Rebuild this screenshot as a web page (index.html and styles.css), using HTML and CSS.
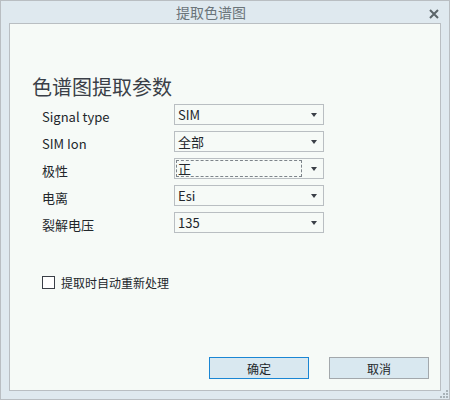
FILE: index.html
```html
<!DOCTYPE html>
<html lang="zh-CN">
<head>
    <meta charset="UTF-8">
    <title>提取色谱图</title>
    <link rel="stylesheet" href="styles.css">
</head>
<body>
    <div class="dialog">
        <div class="titlebar">
            <span class="title">提取色谱图</span>
            <svg class="close" width="10" height="10" viewBox="0 0 10 10">
                <path d="M1 1 L9 9 M9 1 L1 9" stroke="#5b6569" stroke-width="2"/>
            </svg>
        </div>
        <div class="panel">
            <h1>色谱图提取参数</h1>
            <div class="fields">
                <label>Signal type</label>
                <div class="select"><span>SIM</span><i class="arrow"></i></div>
                <label>SIM Ion</label>
                <div class="select"><span>全部</span><i class="arrow"></i></div>
                <label>极性</label>
                <div class="select focused"><span>正</span><i class="arrow"></i></div>
                <label>电离</label>
                <div class="select"><span>Esi</span><i class="arrow"></i></div>
                <label>裂解电压</label>
                <div class="select"><span>135</span><i class="arrow"></i></div>
            </div>
            <div class="check">
                <span class="box"></span>
                <span>提取时自动重新处理</span>
            </div>
            <div class="buttons">
                <button class="primary">确定</button>
                <button>取消</button>
            </div>
        </div>
        <svg class="grip" width="12" height="10" viewBox="0 0 12 10">
            <g fill="#a9b3b8">
                <rect x="9" y="1" width="2" height="2"/>
                <rect x="6" y="4" width="2" height="2"/>
                <rect x="9" y="4" width="2" height="2"/>
                <rect x="3" y="7" width="2" height="2"/>
                <rect x="6" y="7" width="2" height="2"/>
                <rect x="9" y="7" width="2" height="2"/>
            </g>
        </svg>
    </div>
</body>
</html>
```

FILE: styles.css
```css
* {
    box-sizing: border-box;
}
body {
    margin: 0;
    font-family: "Noto Sans CJK SC", "Noto Sans", sans-serif;
    font-size: 12px;
    color: #22262b;
}
.dialog {
    position: relative;
    width: 450px;
    height: 400px;
    border: 1px solid #b9bec2;
    background-color: #dfe9ef;
    display: flex;
    flex-direction: column;
}
.titlebar {
    height: 22px;
    display: flex;
    align-items: center;
    justify-content: center;
    position: relative;
}
.title {
    font-size: 14px;
    color: #6a7479;
    line-height: 22px;
    margin-right: 28px;
}
.close {
    position: absolute;
    right: 10px;
    top: 8px;
}
.panel {
    flex: 1;
    margin: 0 8px 8px 8px;
    border: 1px solid #b9bec2;
    background-color: #f6faf7;
    padding: 0 11px 11px 22px;
    display: flex;
    flex-direction: column;
}
h1 {
    font-size: 20px;
    font-weight: normal;
    color: #3a3f47;
    line-height: 24px;
    margin: 51px 0 0 0;
}
.fields {
    display: grid;
    grid-template-columns: 132px 150px;
    grid-auto-rows: 21px;
    row-gap: 6px;
    margin: 5px 0 0 10px;
}
label {
    font-size: 13px;
    line-height: 21px;
    padding-top: 2px;
}
.select {
    border: 1px solid #b9bec2;
    background-color: #f6faf7;
    display: flex;
    align-items: center;
    padding: 0 6px 0 3px;
    font-size: 13px;
}
.select span {
    flex: 1;
    line-height: 17px;
}
.select.focused {
    padding-left: 1px;
}
.focused span {
    border: 1px dashed #7d848a;
    padding-left: 1px;
    margin-right: 9px;
    line-height: 15px;
}
.arrow {
    width: 0;
    height: 0;
    border-left: 3px solid transparent;
    border-right: 3px solid transparent;
    border-top: 4px solid #3a3f47;
}
.check {
    display: flex;
    align-items: center;
    gap: 6px;
    margin: 41px 0 0 10px;
    font-size: 12px;
}
.box {
    width: 13px;
    height: 13px;
    border: 1px solid #3a3f47;
    background-color: #fff;
}
.buttons {
    margin-top: auto;
    display: flex;
    justify-content: flex-end;
    gap: 20px;
}
button {
    width: 100px;
    height: 22px;
    font-family: "Noto Sans CJK SC", "Noto Sans", sans-serif;
    font-size: 12px;
    color: #22262b;
    background-color: #d9e8f0;
    border: 1px solid #a3a8ac;
    padding: 0;
}
button.primary {
    border-color: #1a86d4;
}
.grip {
    position: absolute;
    right: 0;
    bottom: 0;
}
```
